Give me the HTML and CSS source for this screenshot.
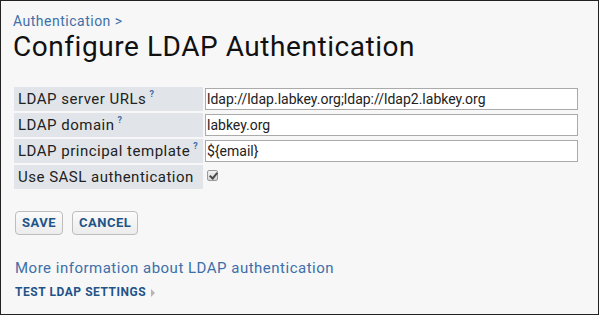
FILE: index.html
```html
<!DOCTYPE html>
<html lang="en">
<head>
  <meta charset="UTF-8">
  <title>Configure LDAP Authentication</title>
  <link rel="stylesheet" href="styles.css">
</head>
<body>
  <div class="frame">
    <!-- Breadcrumb + title -->
    <div class="crumbs"><a href="#">Authentication</a> &gt;</div>
    <h1 class="page-title">Configure LDAP Authentication</h1>

    <!-- Settings form -->
    <table class="ldap-form">
      <tr>
        <td class="label">LDAP server URLs<sup class="help">?</sup></td>
        <td class="field"><input type="text" value="ldap://ldap.labkey.org;ldap://ldap2.labkey.org"></td>
      </tr>
      <tr>
        <td class="label">LDAP domain<sup class="help">?</sup></td>
        <td class="field"><input type="text" value="labkey.org"></td>
      </tr>
      <tr>
        <td class="label">LDAP principal template<sup class="help">?</sup></td>
        <td class="field"><input type="text" value="${email}"></td>
      </tr>
      <tr>
        <td class="label">Use SASL authentication</td>
        <td class="field"><input type="checkbox" class="check" checked></td>
      </tr>
    </table>

    <div class="buttons">
      <a class="btn" href="#">Save</a>
      <a class="btn" href="#">Cancel</a>
    </div>

    <a class="more-link" href="#">More information about LDAP authentication</a>
    <a class="test-link" href="#">Test LDAP Settings <span class="arrow"></span></a>
  </div>
</body>
</html>
```

FILE: styles.css
```css
/* Reset */
* {
  margin: 0;
  padding: 0;
  box-sizing: border-box;
}

body {
  font-family: Roboto, "Liberation Sans", sans-serif;
  color: #222;
  background-color: #f7f7f7;
}

a {
  text-decoration: none;
}

/* Outer frame */
.frame {
  width: 599px;
  height: 315px;
  border: 1px solid #222;
  background-color: #f7f7f7;
  padding: 11px 13px 0 12px;
  display: flex;
  flex-direction: column;
  align-items: flex-start;
}

/* Breadcrumb */
.crumbs {
  font-size: 14px;
  line-height: 18px;
  letter-spacing: 0.5px;
  color: #3d6fa8;
}

.crumbs a {
  color: #3d6fa8;
}

.page-title {
  font-size: 28px;
  font-weight: 400;
  line-height: 32px;
  letter-spacing: 0.55px;
  color: #111;
  margin-top: 1px;
}

/* Form table */
.ldap-form {
  border-spacing: 0 2px;
  margin-top: 22px;
  margin-left: 1px;
  width: 566px;
}

.ldap-form td {
  height: 24px;
  padding: 0;
}

.label {
  background-color: #e1e5e9;
  font-size: 15px;
  letter-spacing: 0.5px;
  padding: 0 4px !important;
  white-space: nowrap;
  width: 189px;
}

.help {
  font-size: 9px;
  font-weight: 700;
  color: #3d6fa8;
  margin-left: 3px;
  vertical-align: 7px;
  line-height: 0;
}

.field {
  padding-left: 2px !important;
}

.field input[type="text"] {
  width: 373px;
  height: 22px;
  border: 1px solid #aaa;
  background-color: #fff;
  font-family: Roboto, "Liberation Sans", sans-serif;
  font-size: 14px;
  color: #222;
  padding: 0 1px;
  display: block;
}

/* Checkbox drawn in grey */
.check {
  appearance: none;
  -webkit-appearance: none;
  width: 11px;
  height: 11px;
  border: 1px solid #9a9a9a;
  border-radius: 2px;
  background: linear-gradient(#f2f2f2, #d6d6d6);
  display: block;
  margin: 0 0 4px 2px;
  position: relative;
}

.check:checked::after {
  content: "";
  position: absolute;
  left: 3px;
  top: 0px;
  width: 3px;
  height: 6px;
  border: solid #4a4a4a;
  border-width: 0 2px 2px 0;
  transform: rotate(40deg);
}

/* Buttons */
.buttons {
  display: flex;
  gap: 9px;
  margin-top: 20px;
  margin-left: 2px;
}

.btn {
  display: inline-block;
  height: 24px;
  line-height: 22px;
  padding: 0 6px;
  border: 1px solid #bdbdbd;
  border-radius: 4px;
  background: linear-gradient(#fbfbfb, #ececec);
  font-size: 13px;
  font-weight: 700;
  letter-spacing: 0.5px;
  text-transform: uppercase;
  color: #1f5488;
}

/* Links */
.more-link {
  margin-top: 24px;
  margin-left: 2px;
  font-size: 15px;
  line-height: 18px;
  letter-spacing: 0.5px;
  color: #3d6fa8;
}

.test-link {
  margin-top: 8px;
  margin-left: 2px;
  font-size: 12px;
  font-weight: 700;
  letter-spacing: 0.55px;
  text-transform: uppercase;
  color: #1f5488;
  display: flex;
  align-items: center;
  gap: 5px;
}

.arrow {
  width: 0;
  height: 0;
  margin-top: 1px;
  border-top: 4px solid transparent;
  border-bottom: 4px solid transparent;
  border-left: 4px solid #b5b5b5;
}
```
